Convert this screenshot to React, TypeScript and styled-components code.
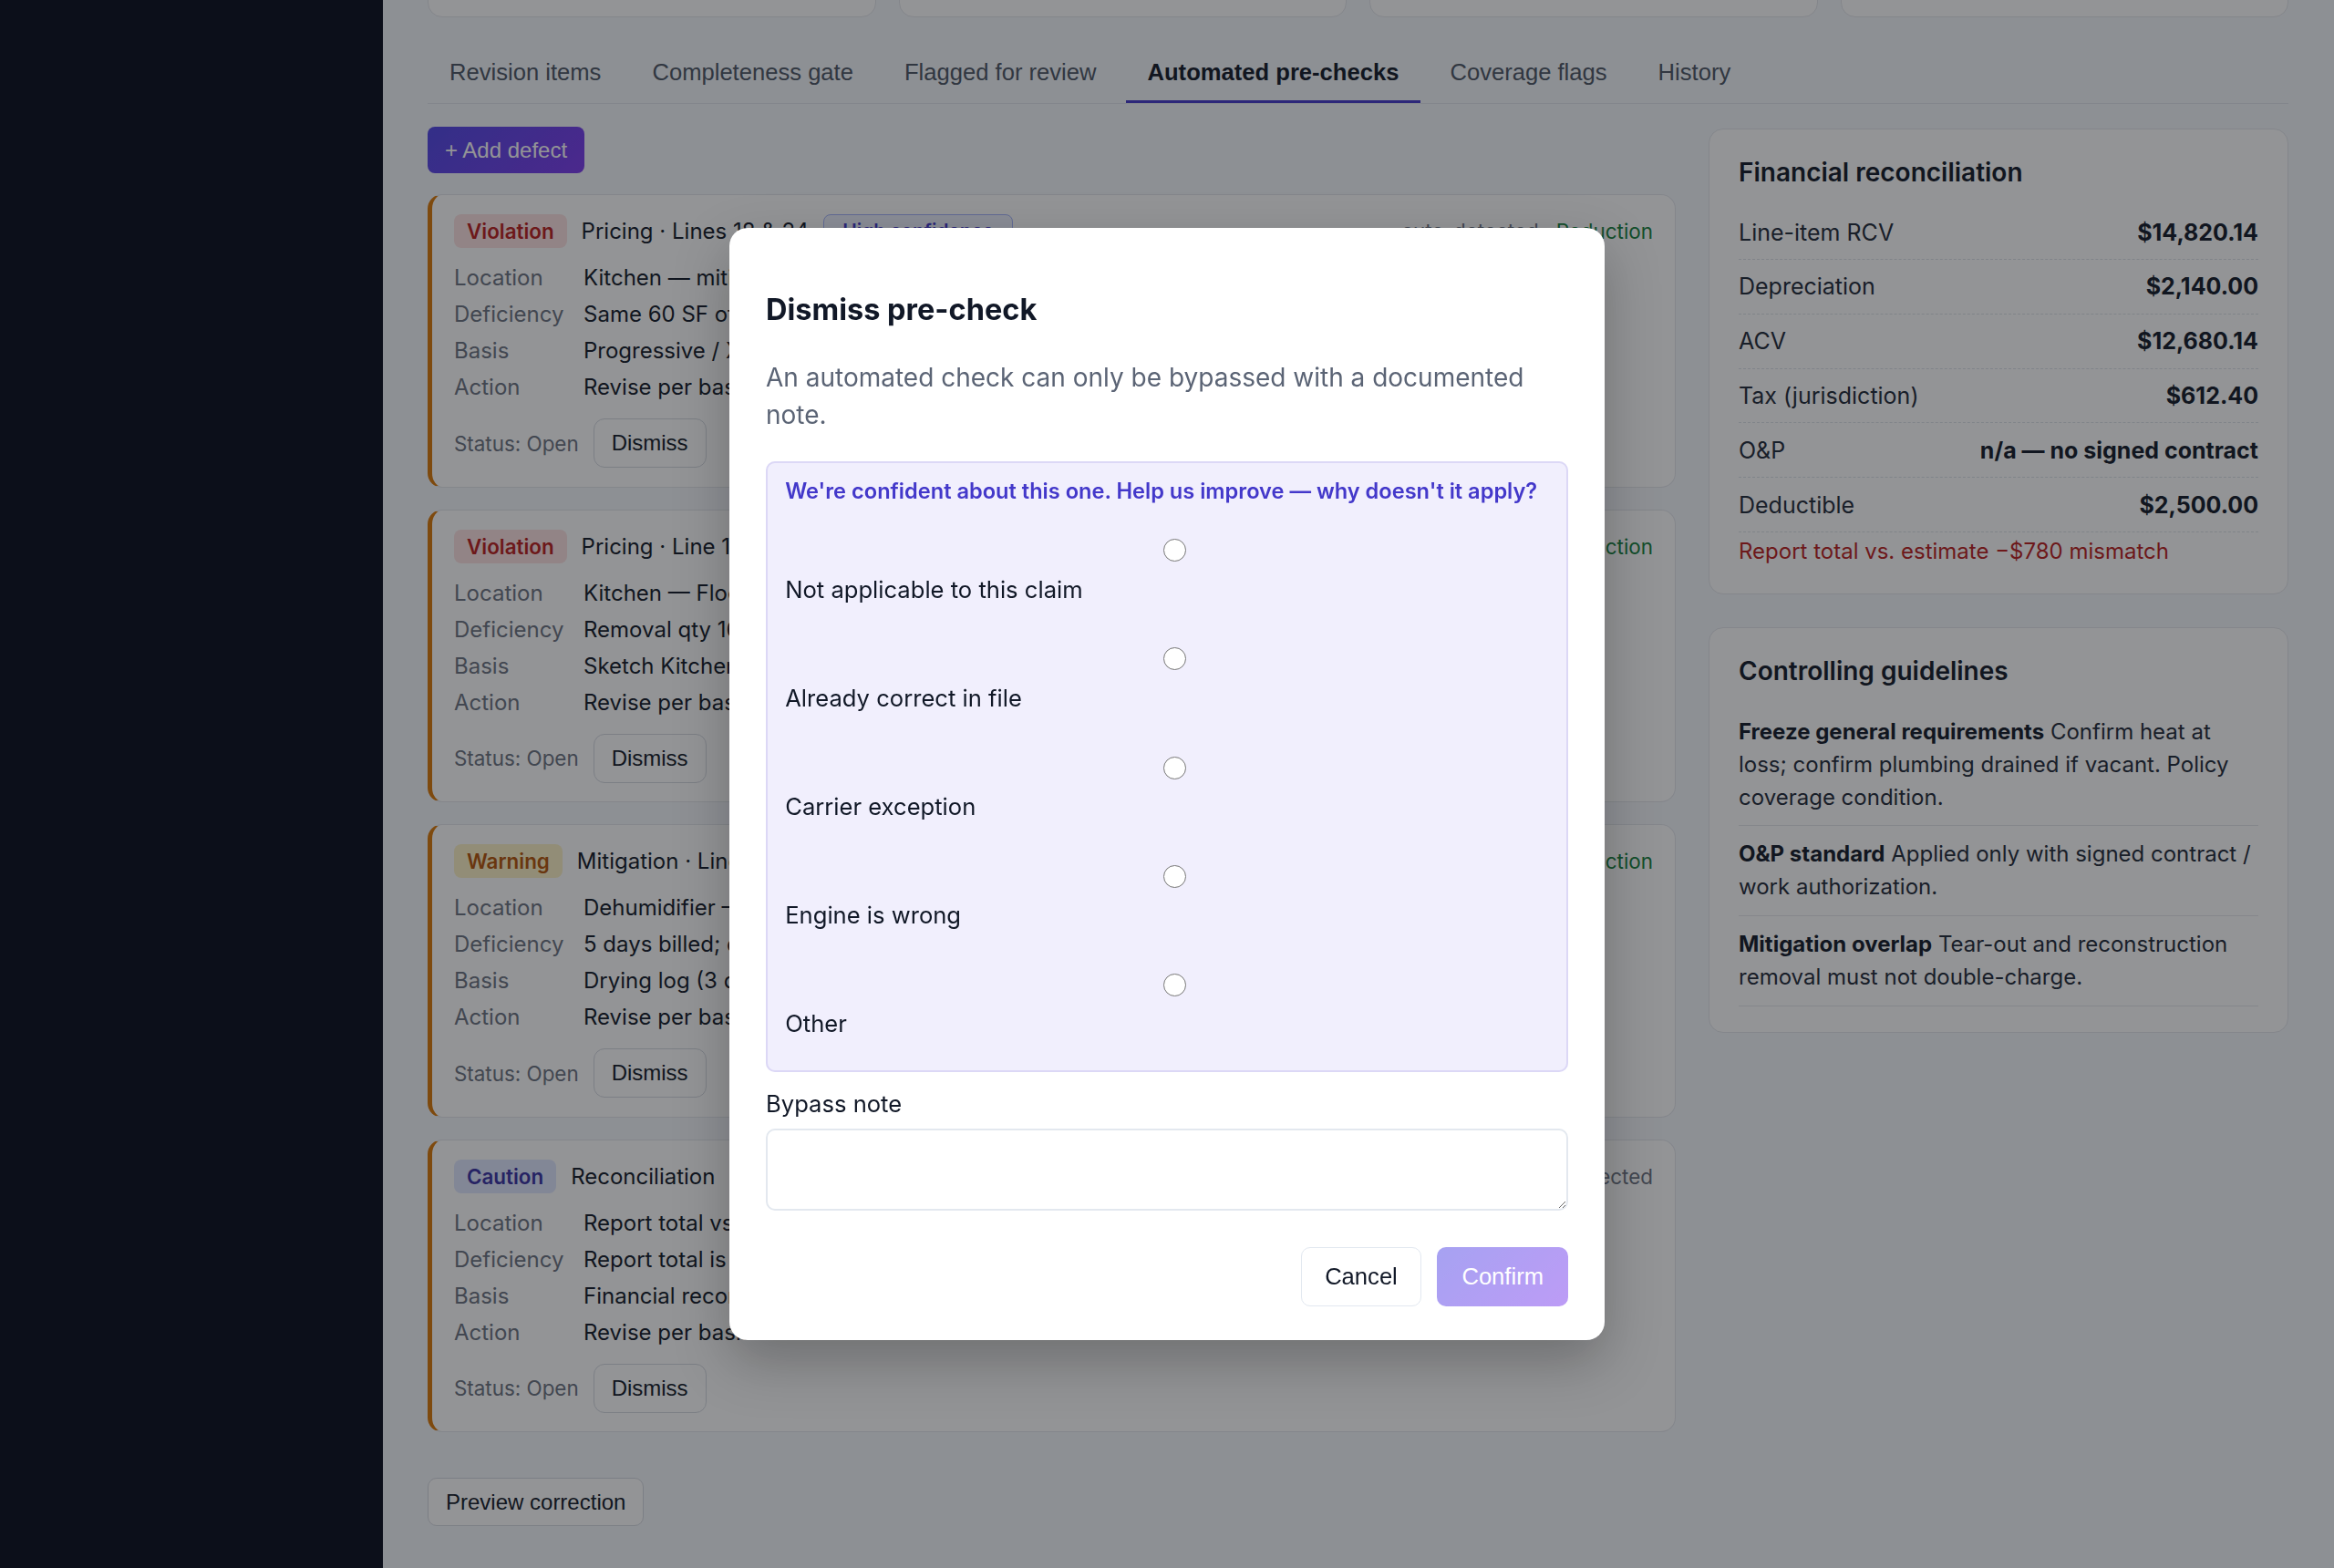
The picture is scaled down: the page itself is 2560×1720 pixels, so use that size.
import React, { useLayoutEffect, useRef } from "react";
import styled, { createGlobalStyle, css } from "styled-components";

const GlobalStyle = createGlobalStyle`
  *, *::before, *::after { box-sizing: border-box; }
  html, body { margin: 0; padding: 0; height: 100%; overflow: hidden; }
  body {
    font-family: Inter, "Noto Sans", "Liberation Sans", sans-serif;
    background: #f5f7fc;
    color: #111827;
  }
  #root { height: 100%; }
`;

const UI_FONT = `"Liberation Sans", Arial, sans-serif`;

const Shell = styled.div`
  display: flex;
  height: 100vh;
`;

const Sidebar = styled.aside`
  flex: none;
  width: 420px;
  background: #080b1c;
`;

const Main = styled.main`
  flex: 1;
  height: 100vh;
  overflow-y: auto;
  padding: 40px 50px 46px 49px;
  scrollbar-width: none;
  &::-webkit-scrollbar { display: none; }
`;

const PageTitle = styled.h1`
  margin: 0 0 28px;
  font-size: 36px;
  font-weight: 700;
  line-height: 44px;
`;

const StatGrid = styled.div`
  display: grid;
  grid-template-columns: repeat(4, 1fr);
  gap: 25px;
  margin-bottom: 30px;
`;

const StatCard = styled.div`
  height: 150px;
  padding: 28px 32px;
  background: #fff;
  border: 1.5px solid #e3e6eb;
  border-radius: 16px;
  display: flex;
  flex-direction: column;
  gap: 10px;
`;

const StatLabel = styled.span`
  font-size: 22.4px;
  color: #6b7280;
`;

const StatValue = styled.span`
  font-size: 36px;
  font-weight: 700;
`;

const Tabs = styled.nav`
  display: flex;
  gap: 8px;
  border-bottom: 1.5px solid #e2e6ec;
`;

const Tab = styled.button<{ $active?: boolean }>`
  font-family: ${UI_FONT};
  font-size: 25.6px;
  line-height: 29.4px;
  padding: 16px 24px;
  background: none;
  border: none;
  border-bottom: 3.2px solid transparent;
  color: #4b5563;
  cursor: pointer;
  ${(p) =>
    p.$active &&
    css`
      color: #111827;
      font-weight: 700;
      border-bottom-color: #4338ca;
    `}
`;

const Body = styled.div`
  display: grid;
  grid-template-columns: 1fr 636px;
  gap: 36px;
  align-items: start;
  margin-top: 24.8px;
`;

const LeftCol = styled.div`
  display: flex;
  flex-direction: column;
  align-items: flex-start;
`;

const RightCol = styled.div`
  display: flex;
  flex-direction: column;
  gap: 36px;
  padding-top: 2px;
`;

const AddButton = styled.button`
  font-family: ${UI_FONT};
  font-size: 24px;
  height: 51px;
  padding: 0 19px;
  border: none;
  border-radius: 8px;
  color: #fff;
  background: linear-gradient(135deg, #4f46e5, #7c3aed);
  margin-bottom: 23px;
`;

const DefectList = styled.div`
  display: flex;
  flex-direction: column;
  gap: 24px;
  align-self: stretch;
`;

const DefectCard = styled.article`
  background: #fff;
  border: 1.5px solid #e3e6eb;
  border-left: 5px solid #d97706;
  border-radius: 16px;
  padding: 21px 24px 20.5px;
`;

const CardHead = styled.div`
  display: flex;
  align-items: center;
  gap: 16px;
  height: 37px;
`;

const tagColors = {
  violation: css`background: #fee2e2; color: #b91c1c;`,
  warning: css`background: #fef3c7; color: #b45309;`,
  caution: css`background: #e0e7ff; color: #3730a3;`,
};

type TagKind = keyof typeof tagColors;

const Tag = styled.span<{ $kind: TagKind }>`
  display: inline-flex;
  align-items: center;
  height: 37px;
  padding: 0 14px;
  border-radius: 8px;
  font-size: 22.4px;
  font-weight: 600;
  ${(p) => tagColors[p.$kind]}
`;

const HeadTitle = styled.span`
  font-size: 24px;
  color: #111827;
  white-space: nowrap;
`;

const ConfidenceBadge = styled.span`
  display: inline-flex;
  align-items: center;
  height: 37px;
  padding: 0 20px;
  border: 1.5px solid #a5b4fc;
  border-radius: 8px;
  background: #eef2ff;
  color: #4338ca;
  font-size: 20.8px;
  font-weight: 600;
  white-space: nowrap;
`;

const Meta = styled.span`
  margin-left: auto;
  font-size: 22.4px;
  color: #6b7280;
  white-space: nowrap;
`;

const Impact = styled.span`
  color: #15803d;
`;

const DetailGrid = styled.dl`
  display: grid;
  grid-template-columns: 122px 1fr;
  column-gap: 20px;
  margin: 13px 0 14px;
  font-size: 24px;
  line-height: 40px;
`;

const DetailLabel = styled.dt`
  color: #6b7280;
`;

const DetailValue = styled.dd`
  margin: 0;
  color: #111827;
  white-space: nowrap;
`;

const StatusRow = styled.div`
  display: flex;
  align-items: center;
  gap: 16px;
`;

const StatusText = styled.span`
  font-size: 22.4px;
  color: #6b7280;
`;

const GhostButton = styled.button`
  font-family: ${UI_FONT};
  font-size: 24px;
  height: 54px;
  padding: 0 19px;
  background: #fff;
  color: #111827;
  border: 1.5px solid #d5d9e0;
  border-radius: 12px;
`;

const PreviewButton = styled(GhostButton)`
  height: 53px;
  margin-top: 50px;
  border-radius: 10px;
`;

const Panel = styled.section`
  background: #fff;
  border: 1.5px solid #e3e6eb;
  border-radius: 16px;
  padding: 30px 32px 28px;
`;

const PanelTitle = styled.h3`
  margin: 0 0 19px;
  font-size: 28px;
  line-height: 34px;
  font-weight: 600;
`;

const FinRow = styled.div`
  display: flex;
  justify-content: space-between;
  padding: 10.4px 0;
  border-bottom: 1.5px dashed #dde1e7;
  font-size: 25px;
  line-height: 38px;
  color: #1f2937;
`;

const FinValue = styled.span`
  font-weight: 700;
  color: #111827;
`;

const Mismatch = styled.div`
  margin-top: 3px;
  font-size: 24px;
  line-height: 36px;
  color: #b91c1c;
`;

const Guideline = styled.p`
  margin: 0;
  padding: 12.8px 0;
  border-bottom: 1.5px solid #e5e7eb;
  font-size: 24px;
  line-height: 36px;
  color: #1f2937;
`;

const GuidelineName = styled.strong`
  font-weight: 700;
  color: #111827;
`;

const Overlay = styled.div`
  position: fixed;
  inset: 0;
  background: rgba(17, 20, 24, 0.455);
  display: flex;
  align-items: center;
  justify-content: center;
`;

const Dialog = styled.div`
  width: 960px;
  background: #fff;
  border-radius: 20px;
  padding: 38px 40px 37px;
  box-shadow: 0 24px 60px rgba(0, 0, 0, 0.25);
`;

const DialogTitle = styled.h2`
  margin: 34px 0 0;
  font-size: 32.5px;
  line-height: 36px;
  font-weight: 700;
  color: #111827;
`;

const DialogText = styled.p`
  margin: 36px 0 0;
  font-size: 28px;
  line-height: 41px;
  color: #5b6475;
`;

const ReasonBox = styled.fieldset`
  margin: 30px 0 0;
  border: 2px solid #dcd8f6;
  border-radius: 10px;
  background: #f1effd;
  padding: 19.2px 19.2px 32px;
  min-width: 0;
`;

const ReasonPrompt = styled.legend`
  float: left;
  width: 100%;
  padding: 0;
  margin: 0 0 29px;
  font-size: 23.6px;
  line-height: 24px;
  font-weight: 600;
  color: #4338ca;
  white-space: nowrap;
`;

const ReasonList = styled.div`
  clear: both;
  display: flex;
  flex-direction: column;
  gap: 33.2px;
`;

const Reason = styled.label`
  display: grid;
  grid-template-rows: 48px 38px;
  cursor: pointer;
`;

const RadioSlot = styled.span`
  display: flex;
  align-items: center;
  justify-content: center;
  padding-left: 17px;
`;

const RadioInput = styled.input`
  appearance: none;
  margin: 0;
  width: 25px;
  height: 25px;
  border: 1.6px solid #767676;
  border-radius: 50%;
  background: #fff;
`;

const ReasonText = styled.span`
  font-size: 25.6px;
  line-height: 38px;
  color: #111827;
`;

const FieldLabel = styled.label`
  display: block;
  margin-top: 16px;
  font-size: 25.6px;
  line-height: 38px;
  color: #111827;
`;

const NoteArea = styled.textarea`
  display: block;
  width: 100%;
  height: 90px;
  margin-top: 8px;
  border: 2px solid #e3e8ef;
  border-radius: 10px;
  background: #fff;
  resize: vertical;
  font-family: inherit;
  font-size: 24px;
`;

const DialogActions = styled.div`
  display: flex;
  justify-content: flex-end;
  gap: 17px;
  margin-top: 40px;
`;

const CancelButton = styled.button`
  font-family: ${UI_FONT};
  font-size: 25.6px;
  height: 65px;
  padding: 0 25.6px;
  background: #fff;
  color: #111827;
  border: 1.5px solid #e2e8f0;
  border-radius: 10px;
`;

const ConfirmButton = styled.button`
  font-family: ${UI_FONT};
  font-size: 25.6px;
  height: 65px;
  padding: 0 27px;
  border: none;
  border-radius: 10px;
  color: #fff;
  background: linear-gradient(135deg, #4f46e5, #7c3aed);
  opacity: 0.5;
`;

type Defect = {
  kind: TagKind;
  tag: string;
  title: string;
  confidence?: string;
  impact?: string;
  rows: [string, string][];
};

const defects: Defect[] = [
  {
    kind: "violation",
    tag: "Violation",
    title: "Pricing · Lines 18 & 24",
    confidence: "High confidence",
    impact: "Reduction",
    rows: [
      ["Location", "Kitchen — mitigation and rebuild"],
      ["Deficiency", "Same 60 SF of drywall removal billed on both lines"],
      ["Basis", "Progressive / Xactimate duplicate-line guideline"],
      ["Action", "Revise per basis: remove line 24"],
    ],
  },
  {
    kind: "violation",
    tag: "Violation",
    title: "Pricing · Line 14",
    confidence: "High confidence",
    impact: "Reduction",
    rows: [
      ["Location", "Kitchen — Flooring"],
      ["Deficiency", "Removal qty 168 SF exceeds sketch floor area"],
      ["Basis", "Sketch Kitchen 142 SF"],
      ["Action", "Revise per basis"],
    ],
  },
  {
    kind: "warning",
    tag: "Warning",
    title: "Mitigation · Line 31",
    impact: "Reduction",
    rows: [
      ["Location", "Dehumidifier — Kitchen"],
      ["Deficiency", "5 days billed; drying log supports 3"],
      ["Basis", "Drying log (3 days to dry standard)"],
      ["Action", "Revise per basis"],
    ],
  },
  {
    kind: "caution",
    tag: "Caution",
    title: "Reconciliation",
    rows: [
      ["Location", "Report total vs. estimate total"],
      ["Deficiency", "Report total is $780 lower than estimate"],
      ["Basis", "Financial reconciliation"],
      ["Action", "Revise per basis"],
    ],
  },
];

const finance: [string, string][] = [
  ["Line-item RCV", "$14,820.14"],
  ["Depreciation", "$2,140.00"],
  ["ACV", "$12,680.14"],
  ["Tax (jurisdiction)", "$612.40"],
  ["O&P", "n/a — no signed contract"],
  ["Deductible", "$2,500.00"],
];

const guidelines: [string, string][] = [
  ["Freeze general requirements", "Confirm heat at loss; confirm plumbing drained if vacant. Policy coverage condition."],
  ["O&P standard", "Applied only with signed contract / work authorization."],
  ["Mitigation overlap", "Tear-out and reconstruction removal must not double-charge."],
];

const reasons = [
  "Not applicable to this claim",
  "Already correct in file",
  "Carrier exception",
  "Engine is wrong",
  "Other",
];

const tabs = [
  "Revision items",
  "Completeness gate",
  "Flagged for review",
  "Automated pre-checks",
  "Coverage flags",
  "History",
];

const stats: [string, string][] = [
  ["Estimate RCV", "$14,820.14"],
  ["Open pre-checks", "4"],
  ["Flagged items", "2"],
  ["Coverage flags", "1"],
];

export default function App() {
  const mainRef = useRef<HTMLElement>(null);

  useLayoutEffect(() => {
    const el = mainRef.current;
    if (el) el.scrollTop = el.scrollHeight;
  }, []);

  return (
    <>
      <GlobalStyle />
      <Shell>
        <Sidebar />
        <Main ref={mainRef}>
          <PageTitle>Claim 4471-WTR · Desk review</PageTitle>
          <StatGrid>
            {stats.map(([label, value]) => (
              <StatCard key={label}>
                <StatLabel>{label}</StatLabel>
                <StatValue>{value}</StatValue>
              </StatCard>
            ))}
          </StatGrid>
          <Tabs>
            {tabs.map((t) => (
              <Tab key={t} $active={t === "Automated pre-checks"}>
                {t}
              </Tab>
            ))}
          </Tabs>
          <Body>
            <LeftCol>
              <AddButton>+ Add defect</AddButton>
              <DefectList>
                {defects.map((d, i) => (
                  <DefectCard key={i}>
                    <CardHead>
                      <Tag $kind={d.kind}>{d.tag}</Tag>
                      <HeadTitle>{d.title}</HeadTitle>
                      {d.confidence && <ConfidenceBadge>{d.confidence}</ConfidenceBadge>}
                      <Meta>
                        auto-detected
                        {d.impact && (
                          <>
                            {" · "}
                            <Impact>{d.impact}</Impact>
                          </>
                        )}
                      </Meta>
                    </CardHead>
                    <DetailGrid>
                      {d.rows.map(([k, v]) => (
                        <React.Fragment key={k}>
                          <DetailLabel>{k}</DetailLabel>
                          <DetailValue>{v}</DetailValue>
                        </React.Fragment>
                      ))}
                    </DetailGrid>
                    <StatusRow>
                      <StatusText>Status: Open</StatusText>
                      <GhostButton>Dismiss</GhostButton>
                    </StatusRow>
                  </DefectCard>
                ))}
              </DefectList>
              <PreviewButton>Preview correction</PreviewButton>
            </LeftCol>
            <RightCol>
              <Panel>
                <PanelTitle>Financial reconciliation</PanelTitle>
                {finance.map(([k, v]) => (
                  <FinRow key={k}>
                    <span>{k}</span>
                    <FinValue>{v}</FinValue>
                  </FinRow>
                ))}
                <Mismatch>Report total vs. estimate −$780 mismatch</Mismatch>
              </Panel>
              <Panel>
                <PanelTitle>Controlling guidelines</PanelTitle>
                {guidelines.map(([k, v]) => (
                  <Guideline key={k}>
                    <GuidelineName>{k}</GuidelineName> {v}
                  </Guideline>
                ))}
              </Panel>
            </RightCol>
          </Body>
        </Main>
      </Shell>
      <Overlay>
        <Dialog role="dialog" aria-modal="true">
          <DialogTitle>Dismiss pre-check</DialogTitle>
          <DialogText>
            An automated check can only be bypassed with a documented note.
          </DialogText>
          <ReasonBox>
            <ReasonPrompt>
              We're confident about this one. Help us improve — why doesn't it apply?
            </ReasonPrompt>
            <ReasonList>
              {reasons.map((r) => (
                <Reason key={r}>
                  <RadioSlot>
                    <RadioInput type="radio" name="reason" value={r} />
                  </RadioSlot>
                  <ReasonText>{r}</ReasonText>
                </Reason>
              ))}
            </ReasonList>
          </ReasonBox>
          <FieldLabel htmlFor="bypass-note">Bypass note</FieldLabel>
          <NoteArea id="bypass-note" />
          <DialogActions>
            <CancelButton>Cancel</CancelButton>
            <ConfirmButton disabled>Confirm</ConfirmButton>
          </DialogActions>
        </Dialog>
      </Overlay>
    </>
  );
}
